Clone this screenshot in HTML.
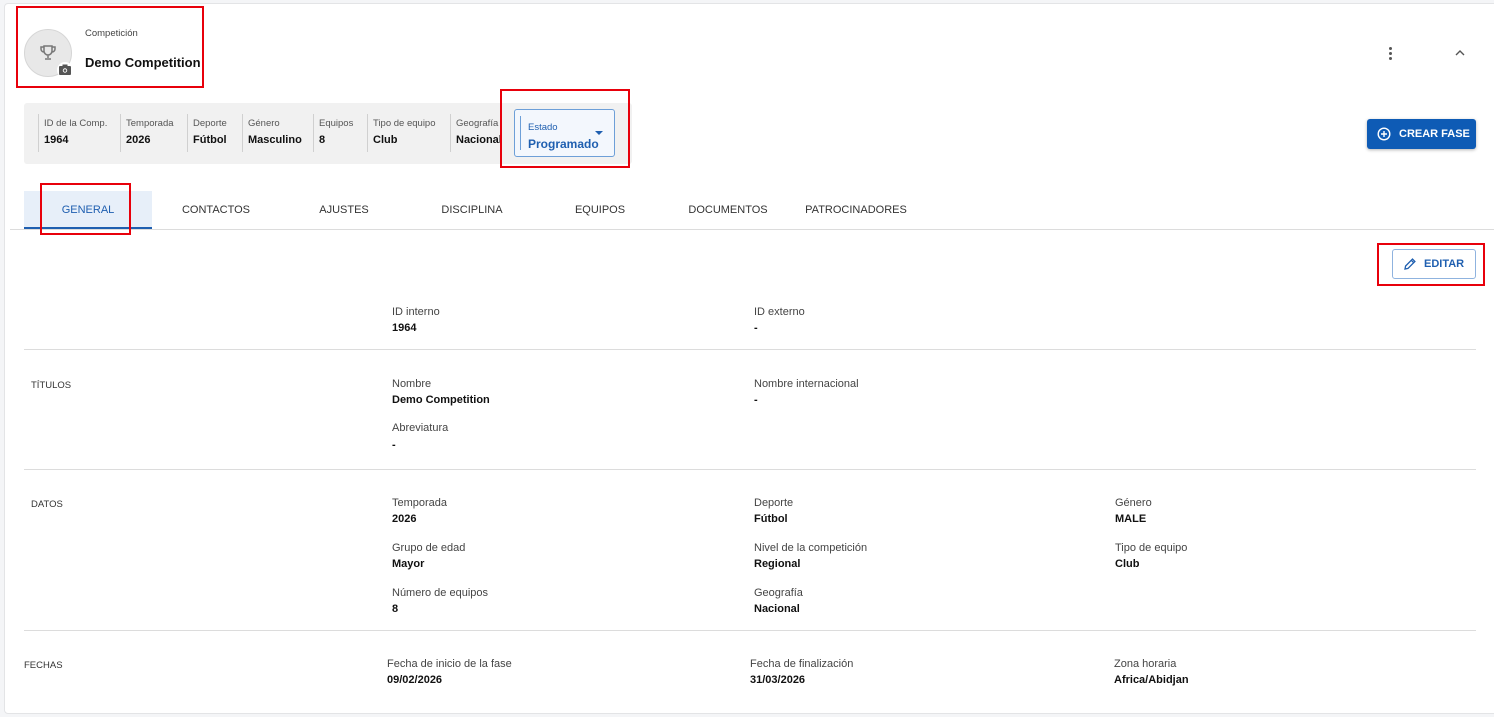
<!DOCTYPE html>
<html><head><meta charset="utf-8"><style>
*{box-sizing:border-box;margin:0;padding:0}
body{width:1494px;height:717px;background:#f4f5f7;font-family:"Liberation Sans",sans-serif;color:#222;position:relative;overflow:hidden}
.card{position:absolute;left:4px;top:3px;width:1500px;height:711px;background:#fff;border:1px solid #e3e4e6;border-radius:4px}
.a{position:absolute;white-space:nowrap}
.red{position:absolute;border:2px solid #e8000b}
.lbl{font-size:11px;color:#444}
.val{font-size:11px;font-weight:bold;color:#111}
.sec{font-size:9.5px;color:#333}
.hr{position:absolute;left:24px;width:1452px;height:1px;background:#dcdcdc}
.tab{position:absolute;top:191px;height:38px;width:128px;text-align:center;line-height:38px;font-size:11px;color:#333}
.ch{position:absolute;top:114px;height:38px;border-left:1px solid #d0d0d0;padding-left:5px}
.ch .l{font-size:9.5px;color:#555;margin-top:4px}
.ch .v{font-size:11px;font-weight:bold;color:#111;margin-top:5px}
</style></head><body>
<div class="card"></div>
<!-- header -->
<div class="a" style="left:24px;top:29px;width:48px;height:48px;border-radius:50%;background:#e8e8e8;border:1px solid #d6d6d6"></div>
<svg class="a" style="left:38px;top:43px" width="20" height="20" viewBox="0 0 20 20"><path d="M6 3h8v5a4 4 0 0 1-8 0z M6 4H3v2a3 3 0 0 0 3 3 M14 4h3v2a3 3 0 0 1-3 3 M10 12v3 M7 16h6" fill="none" stroke="#777" stroke-width="1.5"/></svg>
<div class="a" style="left:57px;top:62px;width:16px;height:16px;background:#fff;border-radius:50%"></div>
<svg class="a" style="left:58px;top:63px" width="14" height="13" viewBox="0 0 14 13"><rect x="1" y="3" width="12" height="9" rx="1" fill="#555"/><rect x="4.5" y="1.5" width="5" height="2" fill="#555"/><circle cx="7" cy="7.5" r="2.2" fill="#fff"/><circle cx="7" cy="7.5" r="1.3" fill="#555"/></svg>
<div class="a" style="left:85px;top:28px;font-size:9.5px;color:#444">Competición</div>
<div class="a" style="left:85px;top:55px;font-size:13px;font-weight:bold;color:#111">Demo Competition</div>
<div class="red" style="left:16px;top:6px;width:188px;height:82px"></div>
<!-- kebab and chevron -->
<div class="a" style="left:1389px;top:47px;width:3px;height:3px;border-radius:50%;background:#555"></div>
<div class="a" style="left:1389px;top:52px;width:3px;height:3px;border-radius:50%;background:#555"></div>
<div class="a" style="left:1389px;top:57px;width:3px;height:3px;border-radius:50%;background:#555"></div>
<svg class="a" style="left:1454px;top:49px" width="12" height="8" viewBox="0 0 12 8"><path d="M2 6l4-4 4 4" fill="none" stroke="#555" stroke-width="1.4"/></svg>
<!-- chips bar -->
<div class="a" style="left:24px;top:103px;width:608px;height:61px;background:#f1f1f1;border-radius:3px"></div>
<div class="ch" style="left:38px"><div class="l">ID de la Comp.</div><div class="v">1964</div></div>
<div class="ch" style="left:120px"><div class="l">Temporada</div><div class="v">2026</div></div>
<div class="ch" style="left:187px"><div class="l">Deporte</div><div class="v">Fútbol</div></div>
<div class="ch" style="left:242px"><div class="l">Género</div><div class="v">Masculino</div></div>
<div class="ch" style="left:313px"><div class="l">Equipos</div><div class="v">8</div></div>
<div class="ch" style="left:367px"><div class="l">Tipo de equipo</div><div class="v">Club</div></div>
<div class="ch" style="left:450px;width:52px;overflow:hidden"><div class="l">Geografía</div><div class="v">Nacional</div></div>
<div class="a" style="left:514px;top:109px;width:101px;height:48px;background:#f3f7fd;border:1px solid #6d9fd8;border-radius:3px"></div>
<div class="a" style="left:520px;top:116px;width:1px;height:34px;background:#6d9fd8"></div>
<div class="a" style="left:528px;top:122px;font-size:9.5px;color:#1f5fb0">Estado</div>
<div class="a" style="left:528px;top:137px;font-size:12px;font-weight:bold;color:#1f5fb0">Programado</div>
<svg class="a" style="left:594px;top:130px" width="10" height="6"><path d="M1 1h8l-4 4z" fill="#1f5fb0"/></svg>
<div class="red" style="left:500px;top:89px;width:130px;height:79px"></div>
<!-- crear fase -->
<div class="a" style="left:1367px;top:119px;width:109px;height:30px;background:#0e5bb5;border-radius:3px;box-shadow:0 1px 3px rgba(0,0,0,.3)"></div>
<svg class="a" style="left:1377px;top:127px" width="14" height="14" viewBox="0 0 14 14"><circle cx="7" cy="7" r="5.8" fill="none" stroke="#fff" stroke-width="1.4"/><path d="M7 4v6M4 7h6" stroke="#fff" stroke-width="1.4"/></svg>
<div class="a" style="left:1399px;top:128px;font-size:11px;font-weight:bold;color:#fff">CREAR FASE</div>
<!-- tabs -->
<div class="a" style="left:24px;top:191px;width:128px;height:38px;background:#e7eff9"></div>
<div class="a" style="left:24px;top:227px;width:128px;height:2px;background:#1f5fb0"></div>
<div class="a" style="left:10px;top:229px;width:1484px;height:1px;background:#dcdcdc"></div>
<div class="tab" style="left:24px;color:#1f5fb0">GENERAL</div>
<div class="tab" style="left:152px">CONTACTOS</div>
<div class="tab" style="left:280px">AJUSTES</div>
<div class="tab" style="left:408px">DISCIPLINA</div>
<div class="tab" style="left:536px">EQUIPOS</div>
<div class="tab" style="left:664px">DOCUMENTOS</div>
<div class="tab" style="left:792px">PATROCINADORES</div>
<div class="red" style="left:40px;top:183px;width:91px;height:52px"></div>
<!-- editar -->
<div class="a" style="left:1392px;top:249px;width:84px;height:30px;border:1px solid #8fb3df;border-radius:3px;background:#fff"></div>
<svg class="a" style="left:1403px;top:257px" width="14" height="14" viewBox="0 0 14 14"><path d="M2 12l.6-3L9.5 2.1l2.4 2.4L5 11.4z M8.3 3.3l2.4 2.4" fill="none" stroke="#1f5fb0" stroke-width="1.3"/></svg>
<div class="a" style="left:1424px;top:258px;font-size:11px;font-weight:bold;color:#1f5fb0">EDITAR</div>
<div class="red" style="left:1377px;top:243px;width:108px;height:43px"></div>
<!-- content -->
<div class="a lbl" style="left:392px;top:306px">ID interno</div><div class="a val" style="left:392px;top:322px">1964</div>
<div class="a lbl" style="left:754px;top:306px">ID externo</div><div class="a val" style="left:754px;top:322px">-</div>
<div class="hr" style="top:349px"></div>
<div class="a sec" style="left:31px;top:380px">TÍTULOS</div>
<div class="a lbl" style="left:392px;top:378px">Nombre</div><div class="a val" style="left:392px;top:394px">Demo Competition</div>
<div class="a lbl" style="left:754px;top:378px">Nombre internacional</div><div class="a val" style="left:754px;top:394px">-</div>
<div class="a lbl" style="left:392px;top:422px">Abreviatura</div><div class="a val" style="left:392px;top:439px">-</div>
<div class="hr" style="top:469px"></div>
<div class="a sec" style="left:31px;top:499px">DATOS</div>
<div class="a lbl" style="left:392px;top:497px">Temporada</div><div class="a val" style="left:392px;top:513px">2026</div>
<div class="a lbl" style="left:754px;top:497px">Deporte</div><div class="a val" style="left:754px;top:513px">Fútbol</div>
<div class="a lbl" style="left:1115px;top:497px">Género</div><div class="a val" style="left:1115px;top:513px">MALE</div>
<div class="a lbl" style="left:392px;top:542px">Grupo de edad</div><div class="a val" style="left:392px;top:558px">Mayor</div>
<div class="a lbl" style="left:754px;top:542px">Nivel de la competición</div><div class="a val" style="left:754px;top:558px">Regional</div>
<div class="a lbl" style="left:1115px;top:542px">Tipo de equipo</div><div class="a val" style="left:1115px;top:558px">Club</div>
<div class="a lbl" style="left:392px;top:587px">Número de equipos</div><div class="a val" style="left:392px;top:603px">8</div>
<div class="a lbl" style="left:754px;top:587px">Geografía</div><div class="a val" style="left:754px;top:603px">Nacional</div>
<div class="hr" style="top:630px"></div>
<div class="a sec" style="left:24px;top:660px">FECHAS</div>
<div class="a lbl" style="left:387px;top:658px">Fecha de inicio de la fase</div><div class="a val" style="left:387px;top:674px">09/02/2026</div>
<div class="a lbl" style="left:750px;top:658px">Fecha de finalización</div><div class="a val" style="left:750px;top:674px">31/03/2026</div>
<div class="a lbl" style="left:1114px;top:658px">Zona horaria</div><div class="a val" style="left:1114px;top:674px">Africa/Abidjan</div>
</body></html>
